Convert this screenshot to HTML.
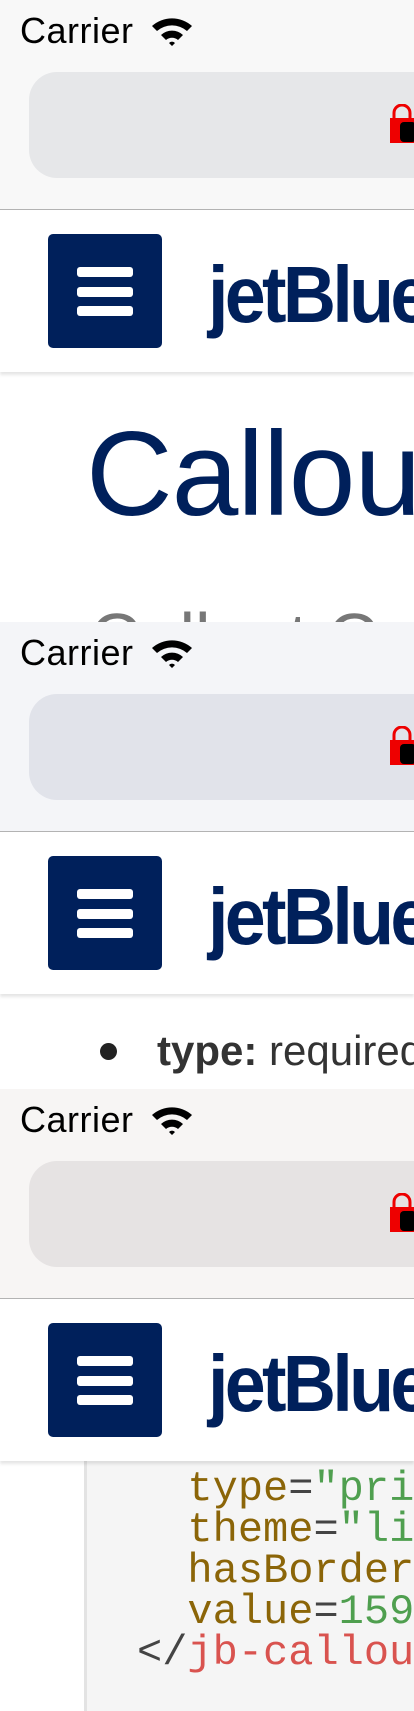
<!DOCTYPE html>
<html><head><meta charset="utf-8"><style>
*{margin:0;padding:0;box-sizing:border-box}
html,body{width:414px;height:1711px;overflow:hidden;background:#fff;font-family:"Liberation Sans",sans-serif;position:relative}
#wrap{position:absolute;left:0;top:0;width:414px;height:1711px;overflow:hidden}
.abs{position:absolute}
.bar{position:absolute;left:0;width:414px;height:378px;overflow:hidden}
.top{position:absolute;left:0;top:0;width:414px;height:210px;border-bottom:1.5px solid #b3b3b3}
.carrier{position:absolute;left:20px;top:10px;font-size:36px;color:#000;letter-spacing:0.5px}
.wifi{position:absolute;left:150px;top:14px}
.url{position:absolute;left:29px;top:72px;width:420px;height:106px;border-radius:28px}
.lock{position:absolute;left:389px;top:104px}
.hdr{position:absolute;left:0;top:211px;width:414px;height:161px;background:#fff;box-shadow:0 3px 3px rgba(0,0,0,0.1)}
.hb{position:absolute;left:48px;top:23px;width:114px;height:114px;background:#00205b;border-radius:5px}
.hb i{position:absolute;left:29px;width:56px;height:10px;background:#fff;border-radius:3px}
.logo{position:absolute;left:208px;top:38px;font-size:80px;font-weight:bold;color:#00205b;letter-spacing:-4px;transform:scaleX(0.92);transform-origin:left;white-space:nowrap}
.code{font-family:"Liberation Mono",monospace;font-size:42px;line-height:41px;white-space:pre;position:absolute}
</style></head><body><div id="wrap">

<div class="abs" style="left:86px;top:405px;font-size:120px;color:#00205b;white-space:nowrap;letter-spacing:-1px">Callout</div>
<div class="abs" style="left:90px;top:598px;font-size:70px;color:#777;white-space:nowrap">Callout Co</div>
<div class="abs" style="left:100px;top:1043px;width:17px;height:17px;border-radius:50%;background:#222"></div>
<div class="abs" style="left:157px;top:1027px;font-size:42px;color:#333;white-space:nowrap"><b>type:</b> required</div>

<div class="abs" style="left:84px;top:1461px;width:330px;height:250px;background:#f5f5f5;border-left:3px solid #e3e3e3"></div>
<div class="code" style="left:137px;top:1469px"><span style="color:#8b6508">  type</span><span style="color:#444">=</span><span style="color:#4f9f4f">"primary"</span>
<span style="color:#8b6508">  theme</span><span style="color:#444">=</span><span style="color:#4f9f4f">"light"</span>
<span style="color:#8b6508">  hasBorder</span>
<span style="color:#8b6508">  value</span><span style="color:#444">=</span><span style="color:#4f9f4f">159</span>
<span style="color:#444">&lt;/</span><span style="color:#d9534f">jb-callout</span></div>

<div class="bar" style="top:0">
 <div class="top" style="background:#f8f8f8"></div>
 <div class="carrier">Carrier</div>
 <svg class="wifi" width="44" height="34" viewBox="0 0 44 34"><path d="M2 12 A30 30 0 0 1 42 12 L37 17 A23 23 0 0 0 7 17Z M11 21 A16 16 0 0 1 33 21 L28 26 A9 9 0 0 0 16 26Z M19 29 A4 4 0 0 1 25 29 L22 32Z" fill="#000"/></svg>
 <div class="url" style="background:#e6e7e9"></div>
 <svg class="lock" width="26" height="40"><rect x="1" y="14" width="25" height="25" fill="#e00"/><path d="M5 16 V9 a8 8 0 0 1 16 0 V16" stroke="#e00" stroke-width="3" fill="none"/><rect x="11" y="18" width="16" height="20" rx="4" fill="#000"/></svg>
 <div class="hdr"><div class="hb"><i style="top:33px"></i><i style="top:53px"></i><i style="top:72px"></i></div><div class="logo">jetBlue</div></div>
</div>

<div class="bar" style="top:622px">
 <div class="top" style="background:#f4f5f8"></div>
 <div class="carrier">Carrier</div>
 <svg class="wifi" width="44" height="34" viewBox="0 0 44 34"><path d="M2 12 A30 30 0 0 1 42 12 L37 17 A23 23 0 0 0 7 17Z M11 21 A16 16 0 0 1 33 21 L28 26 A9 9 0 0 0 16 26Z M19 29 A4 4 0 0 1 25 29 L22 32Z" fill="#000"/></svg>
 <div class="url" style="background:#e1e3ea"></div>
 <svg class="lock" width="26" height="40"><rect x="1" y="14" width="25" height="25" fill="#e00"/><path d="M5 16 V9 a8 8 0 0 1 16 0 V16" stroke="#e00" stroke-width="3" fill="none"/><rect x="11" y="18" width="16" height="20" rx="4" fill="#000"/></svg>
 <div class="hdr"><div class="hb"><i style="top:33px"></i><i style="top:53px"></i><i style="top:72px"></i></div><div class="logo">jetBlue</div></div>
</div>

<div class="bar" style="top:1089px">
 <div class="top" style="background:#f7f5f4"></div>
 <div class="carrier">Carrier</div>
 <svg class="wifi" width="44" height="34" viewBox="0 0 44 34"><path d="M2 12 A30 30 0 0 1 42 12 L37 17 A23 23 0 0 0 7 17Z M11 21 A16 16 0 0 1 33 21 L28 26 A9 9 0 0 0 16 26Z M19 29 A4 4 0 0 1 25 29 L22 32Z" fill="#000"/></svg>
 <div class="url" style="background:#e6e3e3"></div>
 <svg class="lock" width="26" height="40"><rect x="1" y="14" width="25" height="25" fill="#e00"/><path d="M5 16 V9 a8 8 0 0 1 16 0 V16" stroke="#e00" stroke-width="3" fill="none"/><rect x="11" y="18" width="16" height="20" rx="4" fill="#000"/></svg>
 <div class="hdr"><div class="hb"><i style="top:33px"></i><i style="top:53px"></i><i style="top:72px"></i></div><div class="logo">jetBlue</div></div>
</div>

</div></body></html>
